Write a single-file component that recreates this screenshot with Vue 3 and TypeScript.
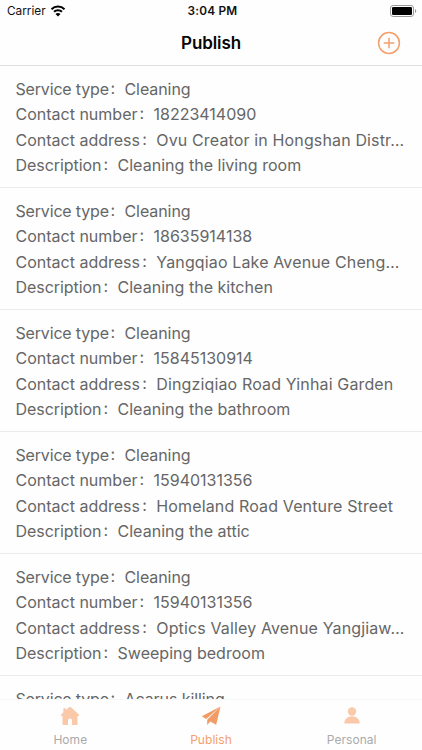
<script setup lang="ts">
interface Service {
  type: string
  phone: string
  address: string
  description: string
}

const services: Service[] = [
  { type: 'Cleaning', phone: '18223414090', address: 'Ovu Creator in Hongshan Distr…', description: 'Cleaning the living room' },
  { type: 'Cleaning', phone: '18635914138', address: 'Yangqiao Lake Avenue Cheng…', description: 'Cleaning the kitchen' },
  { type: 'Cleaning', phone: '15845130914', address: 'Dingziqiao Road Yinhai Garden', description: 'Cleaning the bathroom' },
  { type: 'Cleaning', phone: '15940131356', address: 'Homeland Road Venture Street', description: 'Cleaning the attic' },
  { type: 'Cleaning', phone: '15940131356', address: 'Optics Valley Avenue Yangjiaw…', description: 'Sweeping bedroom' },
]

const rows: { key: keyof Service; label: string }[] = [
  { key: 'type', label: 'Service type' },
  { key: 'phone', label: 'Contact number' },
  { key: 'address', label: 'Contact address' },
  { key: 'description', label: 'Description' },
]
</script>

<template>
  <div class="screen">
    <div class="status">
      <div class="carrier">
        <span>Carrier</span>
        <svg width="16" height="12" viewBox="0 0 16 12" fill="none">
          <path d="M1.5 4.2C5.1.7 10.9.7 14.5 4.2M4 6.8c2.2-2.1 5.8-2.1 8 0" stroke="#000" stroke-width="2" />
          <path d="M8 11.4 5.500 8.900c1.400-1.300 3.600-1.300 5 0Z" fill="#000" />
        </svg>
      </div>
      <span class="time">3:04 PM</span>
      <svg class="battery" width="27" height="12" viewBox="0 0 27 12">
        <rect x=".5" y=".5" width="23" height="11" rx="2.6" fill="none" stroke="#999" />
        <rect x="2" y="2" width="20" height="8" rx="1.2" fill="#000" />
        <path d="M25 4c1.700.6 1.700 3.400 0 4Z" fill="#999" />
      </svg>
    </div>
    <header class="header">
      <h1>Publish</h1>
      <svg class="add" width="24" height="24" viewBox="0 0 24 24" fill="none" stroke="#f3a06c" stroke-width="1.5">
        <circle cx="12" cy="12" r="10.4" />
        <path d="M12 6.700v10.600M6.700 12h10.600" />
      </svg>
    </header>
    <main class="list">
      <section v-for="(service, i) in services" :key="i" class="item">
        <p v-for="row in rows" :key="row.key" :class="row.key">
          <span class="label">{{ row.label }}</span><span class="colon">:</span><span class="value">{{ service[row.key] }}</span>
        </p>
      </section>
      <section class="item">
        <p class="type"><span class="label">Service type</span><span class="colon">:</span><span class="value">Acarus killing</span></p>
      </section>
    </main>
    <nav class="tabs">
      <div class="tab">
        <svg width="22" height="22" viewBox="0 0 22 22"><path d="M10 2.300a1.500 1.500 0 0 1 2 0l7.800 7.200c.7.700.3 1.600-.6 1.600H18.500V19a1 1 0 0 1-1 1H13V15.500a2 2 0 0 0-4 0V20H4.500a1 1 0 0 1-1-1V11.100H2.800c-.9 0-1.300-.9-.6-1.600L4.300 7.500V4a.8.8 0 0 1 .8-.8h1.300a.8.8 0 0 1 .8.8v.9Z" fill="#fac9aa" /></svg>
        <span>Home</span>
      </div>
      <div class="tab active">
        <svg width="22" height="22" viewBox="0 0 22 22" fill="#f19b66"><path d="M20.500 1.500 1.800 11.300 6.200 14Z" /><path d="M20.500 1.500 7.200 14.700V20l3-3.400 6 3.200Z" /></svg>
        <span>Publish</span>
      </div>
      <div class="tab">
        <svg width="22" height="22" viewBox="0 0 22 22" fill="#fac9aa"><circle cx="11" cy="6.5" r="4.2" /><path d="M3.300 18.500c0-4.300 3.300-7.200 7.700-7.200s7.700 2.900 7.700 7.200Z" /></svg>
        <span>Personal</span>
      </div>
    </nav>
  </div>
</template>

<style>
body { background: #fefefe; }
</style>

<style scoped>
.screen {
  display: flex;
  flex-direction: column;
  height: 750px;
  overflow: hidden;
  background: #fefefe;
  font-family: Inter, "Liberation Sans", sans-serif;
}
.status {
  display: grid;
  grid-template-columns: 1fr auto 1fr;
  align-items: center;
  flex: none;
  height: 22px;
  padding: 0 5px 0 7px;
  font-size: 11.8px;
  color: #111;
}
.carrier { display: flex; align-items: center; gap: 4px; }
.time { font-weight: 600; letter-spacing: 0.2px; padding-left: 1px; }
.battery { justify-self: end; margin-top: -1px; }
.header {
  display: grid;
  grid-template-columns: 1fr auto 1fr;
  align-items: center;
  flex: none;
  box-sizing: border-box;
  height: 44px;
  padding: 0 21px 1px;
  border-bottom: 1px solid #dedede;
}
h1 { grid-column: 2; margin: 0; font-size: 17px; line-height: 22px; font-weight: 600; letter-spacing: -0.1px; color: #050505; }
.add { justify-self: end; }
.list { flex: 1; min-height: 0; overflow: hidden; }
.item { box-sizing: border-box; height: 122.080px; padding: 10.700px 15px 0 15.500px; border-bottom: 1px solid #ebebeb; }
p {
  display: flex;
  margin: 0;
  height: 25.450px;
  line-height: 25.450px;
  font-size: 16px;
  color: #666;
  white-space: nowrap;
}
.type .label { width: 92.500px; letter-spacing: -0.170px; }
.phone .label { width: 121.500px; }
.address .label { width: 124.300px; }
.description .label { width: 85.500px; letter-spacing: -0.050px; }
.colon { box-sizing: border-box; width: 16.500px; padding-left: 2.500px; position: relative; top: -1px; }
.type .value { letter-spacing: -0.080px; }
.address .value { letter-spacing: 0.140px; }
.description .value { letter-spacing: 0.030px; }
.tabs { display: grid; grid-template-columns: repeat(3, 1fr); flex: none; box-sizing: border-box; height: 51px; border-top: 1px solid #f7f7f7; }
.tab { display: flex; flex-direction: column; align-items: center; padding-top: 5px; gap: 5px; font-size: 12px; line-height: 15px; letter-spacing: 0.050px; color: #aaa; }
.active { color: #f3a06c; }
</style>
